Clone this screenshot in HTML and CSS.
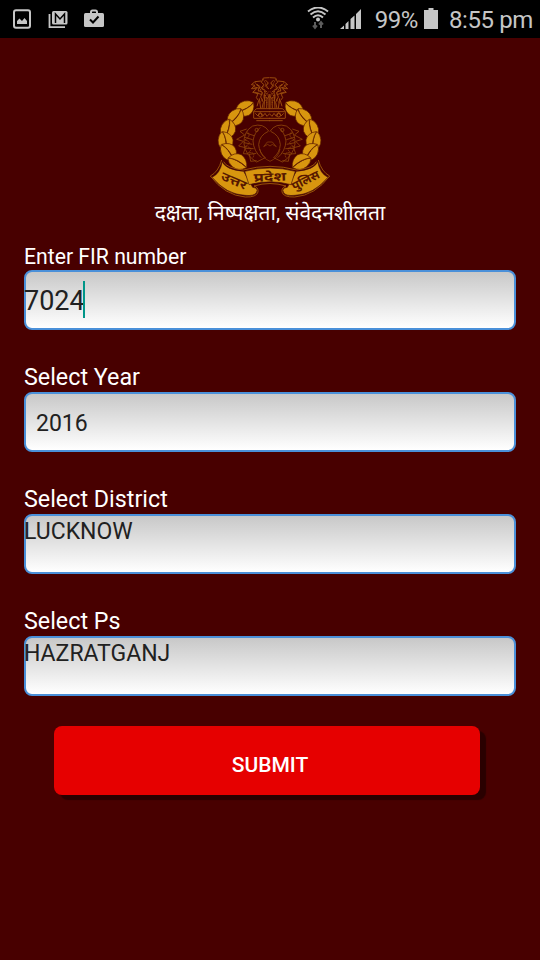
FILE: index.html
```html
<!DOCTYPE html>
<html lang="en">
<head>
  <meta charset="UTF-8">
  <meta name="viewport" content="width=device-width, initial-scale=1.0">
  <title>View FIR</title>
  <link rel="stylesheet" href="styles.css">
</head>
<body>
  <div class="statusbar">
    <div class="notifications">
      <svg width="20" height="20" viewBox="0 0 20 20">
        <rect x="2" y="1.200" width="16" height="17.600" rx="2" fill="none" stroke="#c6c6c6" stroke-width="2"/>
        <path d="M5 15v-3l2.500-2.500L10 12l2.500-3L15 12v3z" fill="#c6c6c6"/>
      </svg>
      <svg width="20" height="20" viewBox="0 0 20 20">
        <path d="M1.500 5v13.200H17" fill="none" stroke="#c6c6c6" stroke-width="1.800"/>
        <rect x="4" y="2" width="15.500" height="13.500" rx="1.500" fill="#c6c6c6"/>
        <path d="M7.500 14V5l4.500 5 4.500-5v9" fill="none" stroke="#000" stroke-width="1.500"/>
      </svg>
      <svg width="20" height="20" viewBox="0 0 20 20">
        <path d="M7 5V3q0-1.500 1.500-1.500h3Q13 1.500 13 3v2" fill="none" stroke="#c6c6c6" stroke-width="2"/>
        <rect x="0" y="4" width="20" height="14" rx="1.500" fill="#c6c6c6"/>
        <path d="M6 10.500l3 3 5.500-6" fill="none" stroke="#000" stroke-width="2"/>
      </svg>
    </div>
    <div class="system">
      <svg class="wifi" width="22" height="24" viewBox="0 0 22 24">
        <g fill="none" stroke="#c6c6c6" stroke-width="2">
          <path d="M1 4.500Q11-3.500 21 4.500"/>
          <path d="M3.500 7.500Q11 1 18.500 7.500"/>
          <path d="M6 10.500Q11 6 16 10.500"/>
        </g>
        <circle cx="11" cy="12.500" r="2" fill="#c6c6c6"/>
        <path d="M8 15v6M6 18.500l2 2.500 2-2.500M14 21v-6M12 17.500l2-2.500 2 2.500" fill="none" stroke="#5c5c5c" stroke-width="2"/>
      </svg>
      <svg class="signal" width="22" height="22" viewBox="0 0 22 22">
        <path d="M0 21l4-3.500V21zM5.500 21v-5l3-3v8zM10.500 21V11l4-3.500V21zM16 21V6l5-5v20z" fill="#c6c6c6"/>
      </svg>
      <span class="percent">99%</span>
      <svg class="battery" width="14" height="21" viewBox="0 0 14 21">
        <path d="M0 2h4.500V0h5v2H14v19H0z" fill="#c6c6c6"/>
      </svg>
      <span class="time">8:55 pm</span>
    </div>
  </div>

  <div class="header">
    <svg class="emblem" width="140" height="130" viewBox="0 0 420 390">
      <defs>
        <g id="sprig">
          <path d="M-29 2Q-18-23 6-23 23-22 32-12 14 4-29 2z"/>
          <path d="M-29 3Q6 6 32-10 29 16 8 22-14 24-29 3z"/>
        </g>
        <g id="half">
          <g fill="#d8960f" stroke="#5d1c00" stroke-width="2">
            <use href="#sprig" transform="translate(133 117) rotate(-16)"/>
            <use href="#sprig" transform="translate(105 145) rotate(-38)"/>
            <use href="#sprig" transform="translate(83 181) rotate(-62)"/>
            <use href="#sprig" transform="translate(77 217) rotate(-88)"/>
            <use href="#sprig" transform="translate(88 248) rotate(-115)"/>
            <use href="#sprig" transform="translate(116 276) rotate(-140)"/>
          </g>
          <!-- fish -->
          <g fill="none" stroke="#8f470b" stroke-width="2.500">
            <path d="M207 184Q190 158 158 168Q130 184 132 222Q137 257 170 276"/>
            <path d="M205 184Q178 196 176 224Q178 248 196 263L170 276"/>
            <path d="M181 172Q163 187 159 213Q161 244 184 263"/>
            <path d="M140 177l-20 7 14 11-24 13 20 6-14 14 20 5-6 18 18 1 4 22 18-2"/>
            <path d="M134 202l24 7M132 218l25 5M137 235l24 1M148 253l21-3M139 189l23 8"/>
            <path d="M140 184Q157 197 134 210Q161 216 135 230Q165 232 145 248Q169 246 158 264" stroke-dasharray="5 2"/>
            <circle cx="170" cy="180" r="5"/>
          </g>
          <!-- lions and capital -->
          <g fill="none" stroke="#984a0d" stroke-width="3">
            <path d="M208 23l-18 1-6 13 8 7-8 10 12 8-3 17 10 6 5-8"/>
            <path d="M183 33l-18 2-11 9 11 2-11 10 16 0-12 11 16 4-5 12 7 9-5 17"/>
            <path d="M168 43l11 8-5 10 13 6-5 14 8 16-4 18M160 50l19 5M163 66l20 7M196 30l9 9-8 10 10 8"/>
            <path d="M194 80l-2 35M201 84l-1 30M207 72v44M178 85l4 30"/>
            <path d="M163 122l7-6h40M160 125h50M162 145h48M169 152h41"/>
            <path d="M161 125v20M166 130l8 8 7-10 7 11 7-9 6 9 8-8"/>
            <circle cx="181" cy="135" r="6"/>
            <path d="M165 38l39 30M170 71l33-32M175 45l28 58M178 100l28-35M190 28l16 30M183 52l22 26" stroke-dasharray="4 3"/>
          </g>
        </g>
      </defs>
      <use href="#half"/>
      <use href="#half" transform="translate(417 0) scale(-1 1)"/>
      <path d="M191 230l11-14h15l12 14-12-7-7 5-7-5z" fill="none" stroke="#8f470b" stroke-width="2"/>
      <path d="M179 237Q184 263 210 274Q236 263 240 237" fill="none" stroke="#8f470b" stroke-width="2"/>
      <!-- ribbon -->
      <g stroke="#48100a" stroke-width="2" fill="#d8960f">
        <path d="M67 275Q76 299 131 304L158 352Q177 354 169 368Q162 379 135 376Q80 374 36 322Q60 311 67 275z"/>
        <path d="M353 275Q344 299 289 304L262 352Q243 354 251 368Q258 379 285 376Q340 374 384 322Q360 311 353 275z"/>
        <path d="M134 304Q210 284 286 304L273 344Q210 327 147 344z"/>
      </g>
      <g fill="none" stroke="#bd790e" stroke-width="2">
        <path d="M65 270Q55 306 31 318Q74 376 136 381Q170 382 174 366Q176 352 162 348Q210 333 258 348Q244 352 246 366Q250 382 284 381Q346 376 389 318Q365 306 355 270"/>
        <path d="M71 275Q79 294 130 300Q210 278 290 300Q341 294 349 275"/>
      </g>
      <g class="ribbon-text">
        <text transform="translate(60 328) rotate(23)" textLength="80" lengthAdjust="spacingAndGlyphs">उत्तर</text>
        <text transform="translate(161 335) rotate(-2)" textLength="98" lengthAdjust="spacingAndGlyphs">प्रदेश</text>
        <text transform="translate(283 362) rotate(-27)" textLength="88" lengthAdjust="spacingAndGlyphs">पुलिस</text>
      </g>
    </svg>
    <div class="motto" lang="hi">दक्षता, निष्पक्षता, संवेदनशीलता</div>
  </div>

  <div class="form">
    <div class="label label-fir">Enter FIR number</div>
    <div class="field fir"><span>7024</span><span class="caret"></span></div>

    <div class="label">Select Year</div>
    <div class="field year">2016</div>

    <div class="label">Select District</div>
    <div class="field">LUCKNOW</div>

    <div class="label">Select Ps</div>
    <div class="field">HAZRATGANJ</div>

    <button class="submit" type="button">SUBMIT</button>
  </div>
</body>
</html>
```
FILE: styles.css
```css
* {
  box-sizing: border-box;
}
body {
  margin: 0;
  height: 960px;
  background-color: #480000;
  font-family: Roboto, "Noto Sans", sans-serif;
  color: #fff;
  overflow: hidden;
}
.statusbar {
  height: 38px;
  background-color: #000;
  color: #c6c6c6;
  display: flex;
  justify-content: space-between;
  padding: 0 7px 0 12px;
  font-size: 24px;
}
.notifications {
  display: flex;
  gap: 16px;
  padding-top: 9px;
}
.system {
  display: flex;
  align-items: flex-start;
  line-height: 40px;
  letter-spacing: -0.4px;
}
.wifi {
  margin: 7px 11px 0 0;
}
.signal {
  margin: 8px 13px 0 0;
}
.battery {
  margin: 8px 11px 0 6px;
}
.header {
  height: 206px;
  padding-top: 32px;
  display: flex;
  flex-direction: column;
  align-items: center;
}
.emblem {
  display: block;
  flex: none;
}
.ribbon-text {
  font-size: 36px;
  font-weight: bold;
  fill: #571800;
}
.motto {
  font-size: 21px;
  line-height: 26px;
  white-space: nowrap;
}
.form {
  padding: 0 24px;
}
.label {
  height: 32px;
  margin-top: 30px;
  line-height: 34px;
  font-size: 23.3px;
}
.label-fir {
  height: 26px;
  margin-top: 0;
  line-height: 26px;
  font-size: 21.2px;
}
.field {
  height: 60px;
  border: 2px solid #4a90d9;
  border-radius: 8px;
  background: linear-gradient(#c8c8c8, #fff);
  color: #212121;
  font-size: 23px;
  line-height: 32px;
  text-indent: -2px;
}
.fir {
  display: flex;
  align-items: center;
  padding-top: 1px;
  font-size: 27px;
}
.caret {
  width: 2px;
  height: 37px;
  margin: -2px 0 0 -2px;
  background-color: #009688;
}
.year {
  line-height: 60px;
  text-indent: 10px;
}
.submit {
  display: block;
  width: 426px;
  height: 69px;
  margin: 30px 0 0 30px;
  padding: 8px 0 0 6px;
  border: none;
  border-radius: 8px;
  background-color: #e60000;
  box-shadow: 6px 5px 1px #2a0000;
  color: #fff;
  font-family: inherit;
  font-size: 21px;
  font-weight: 500;
}
```
